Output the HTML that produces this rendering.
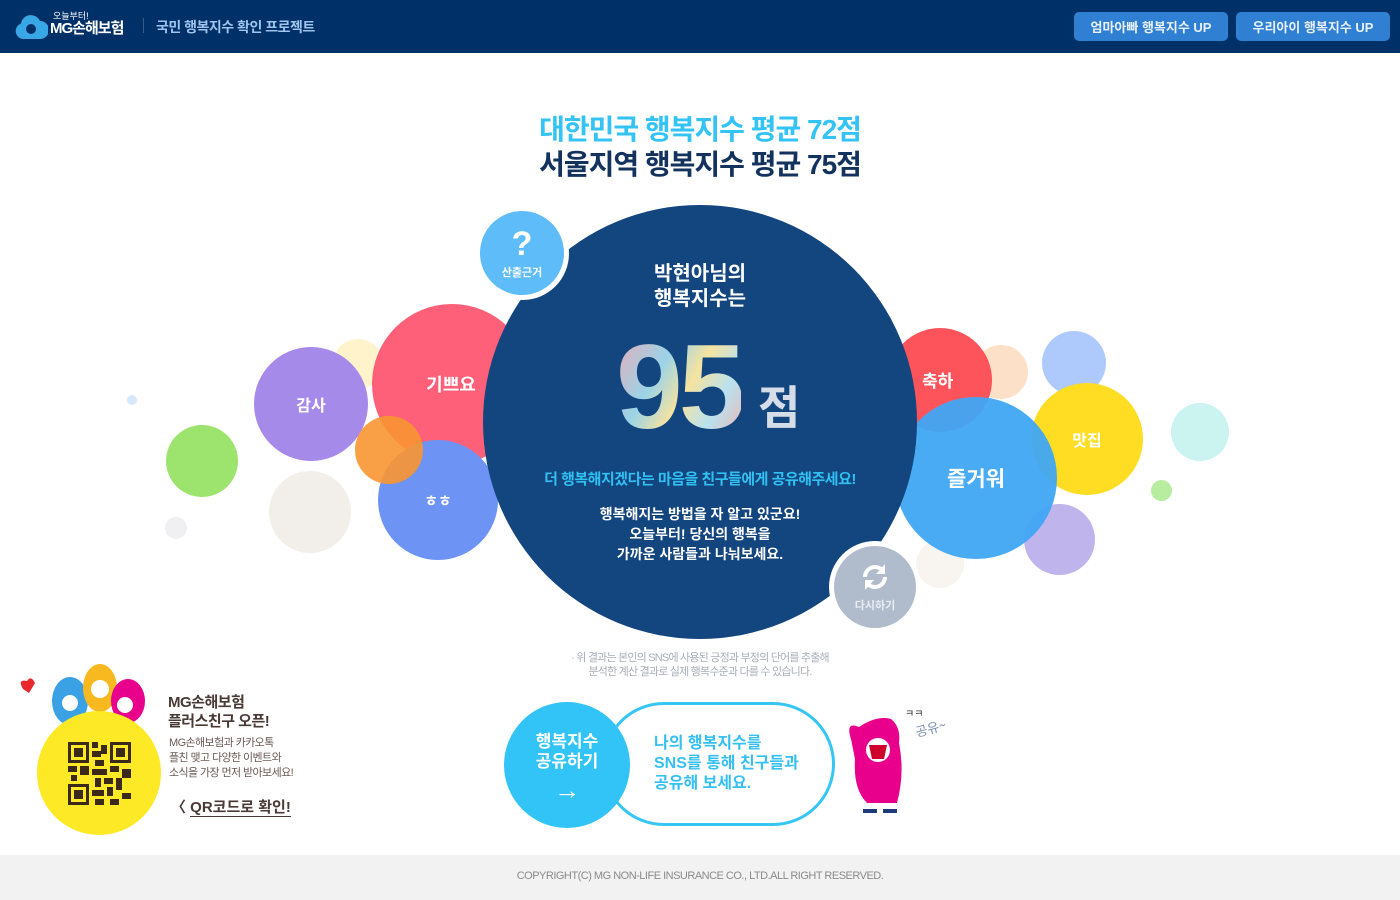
<!DOCTYPE html>
<html><head><meta charset="utf-8"><style>
*{margin:0;padding:0;box-sizing:border-box}
body{width:1400px;height:900px;position:relative;overflow:hidden;background:#fff;font-family:"Liberation Sans","Noto Sans CJK KR",sans-serif}
.hd{position:absolute;left:0;top:0;width:1400px;height:53px;background:#003068}
.c{position:absolute;border-radius:50%;display:flex;align-items:center;justify-content:center;color:#fff;font-weight:bold}
.t{position:absolute;white-space:nowrap}
.btn{position:absolute;top:12px;height:29px;background:#2f7fd3;border-radius:5px;color:#e8f0fa;font-size:13px;display:flex;align-items:center;justify-content:center;font-weight:bold}
</style></head><body>
<div class="hd">
 <svg style="position:absolute;left:14px;top:11px" width="34" height="30" viewBox="0 0 34 30"><path d="M9 28a8 8 0 0 1-2-15.5A10 10 0 0 1 26 10a8 8 0 0 1 0 18z" fill="#39a7e6"/><circle cx="17" cy="18" r="5" fill="#003068"/></svg>
 <div class="t" style="left:53px;top:9px;color:#fff;font-size:9px">오늘부터!</div>
 <div class="t" style="left:50px;top:17px;color:#fff;font-size:15px;font-weight:bold;letter-spacing:-1px">MG손해보험</div>
 <div style="position:absolute;left:143px;top:18px;width:1px;height:15px;background:#3b5a88"></div>
 <div class="t" style="left:156px;top:17px;color:#9fc4ee;font-size:14px;font-weight:bold;letter-spacing:-0.5px">국민 행복지수 확인 프로젝트</div>
 <div class="btn" style="left:1074px;width:154px">엄마아빠 행복지수 UP</div>
 <div class="btn" style="left:1236px;width:154px">우리아이 행복지수 UP</div>
</div>
<div class="t" style="left:0;width:1400px;text-align:center;top:108px;font-size:28px;font-weight:bold;color:#33c3f4;letter-spacing:-1px">대한민국 행복지수 평균 72점</div>
<div class="t" style="left:0;width:1400px;text-align:center;top:143px;font-size:28px;font-weight:bold;color:#13335e;letter-spacing:-1px">서울지역 행복지수 평균 75점</div>

<div class="c" style="left:127px;top:395px;width:10px;height:10px;background:#d6e8fa"></div>
<div class="c" style="left:166px;top:425px;width:72px;height:72px;background:#9de46f"></div>
<div class="c" style="left:269px;top:471px;width:82px;height:82px;background:#f2eeea"></div>
<div class="c" style="left:165px;top:517px;width:22px;height:22px;background:#f0f0f3"></div>
<div class="c" style="left:333px;top:339px;width:50px;height:50px;background:#fff3cc"></div>
<div class="c" style="left:372px;top:304px;width:160px;height:160px;background:#fd6078;font-size:18px;padding-right:2px">기쁘요</div>
<div class="c" style="left:254px;top:347px;width:114px;height:114px;background:#a68aea;font-size:16px">감사</div>
<div class="c" style="left:378px;top:440px;width:120px;height:120px;background:#6d93f5;font-size:15px">ㅎㅎ</div>
<div class="c" style="left:355px;top:416px;width:68px;height:68px;background:rgba(248,150,50,.9)"></div>

<div class="c" style="left:1042px;top:331px;width:64px;height:64px;background:#aecafc"></div>
<div class="c" style="left:974px;top:345px;width:54px;height:54px;background:#fde0c8"></div>
<div class="c" style="left:1031px;top:383px;width:112px;height:112px;background:#ffdd22;font-size:16px">맛집</div>
<div class="c" style="left:1024px;top:504px;width:71px;height:71px;background:#c0b4ec"></div>
<div class="c" style="left:916px;top:540px;width:48px;height:48px;background:#f8f4ef"></div>
<div class="c" style="left:1171px;top:403px;width:58px;height:58px;background:#cbf3ef"></div>
<div class="c" style="left:1151px;top:480px;width:21px;height:21px;background:#b8ec9f"></div>
<div class="c" style="left:888px;top:328px;width:104px;height:104px;background:#fd545b;font-size:17px;justify-content:flex-start;padding-left:34px;padding-bottom:2px">축하</div>
<div class="c" style="left:895px;top:397px;width:162px;height:162px;background:rgba(64,166,244,.95);font-size:21px">즐거워</div>

<div class="c" style="left:483px;top:205px;width:434px;height:434px;background:#13457f"></div>
<div class="t" style="left:483px;width:434px;text-align:center;top:262px;color:#fff;font-size:20px;font-weight:bold;line-height:25px">박현아님의<br>행복지수는</div>
<div class="t" style="left:616px;top:322px;font-size:120px;font-weight:bold;line-height:130px;letter-spacing:-4px;background:linear-gradient(120deg,#f4a6b0,#9ad3e8 35%,#f6e3a0 55%,#b9e1f0 75%,#f4b0a8);-webkit-background-clip:text;background-clip:text;color:transparent">95</div>
<div class="t" style="left:758px;top:372px;font-size:46px;font-weight:bold;color:#d5dde8">점</div>
<div class="t" style="left:483px;width:434px;text-align:center;top:468px;color:#31c0f2;font-size:15px;font-weight:bold;letter-spacing:-0.5px">더 행복해지겠다는 마음을 친구들에게 공유해주세요!</div>
<div class="t" style="left:483px;width:434px;text-align:center;top:504px;color:#fff;font-size:14px;font-weight:bold;line-height:20px">행복해지는 방법을 자 알고 있군요!<br>오늘부터! 당신의 행복을<br>가까운 사람들과 나눠보세요.</div>

<div class="c" style="left:476px;top:207px;width:93px;height:93px;background:#fff"></div>
<div class="c" style="left:480px;top:211px;width:84px;height:84px;background:#5ebcf9;flex-direction:column"><span style="font-size:34px;line-height:34px">?</span><span style="font-size:11px;margin-top:3px">산출근거</span></div>
<div class="c" style="left:829px;top:541px;width:92px;height:92px;background:#fff"></div>
<div class="c" style="left:834px;top:546px;width:82px;height:82px;background:#b0bccc;flex-direction:column;color:#e8edf3">
 <svg width="34" height="32" viewBox="0 0 34 32"><path d="M7 16a10 10 0 0 1 18-6" fill="none" stroke="#fff" stroke-width="4"/><path d="M27 3v10h-9z" fill="#fff"/><path d="M27 16a10 10 0 0 1-18 6" fill="none" stroke="#fff" stroke-width="4"/><path d="M7 29V19h9z" fill="#fff"/></svg>
 <span style="font-size:11px;margin-top:4px">다시하기</span></div>

<div class="t" style="left:0;width:1400px;text-align:center;top:651px;color:#a7adb8;font-size:11px;line-height:14px;letter-spacing:-0.8px">· 위 결과는 본인의 SNS에 사용된 긍정과 부정의 단어를 추출해<br>분석한 계산 결과로 실제 행복수준과 다를 수 있습니다.</div>

<div style="position:absolute;left:602px;top:702px;width:233px;height:124px;border:3px solid #36c6f4;border-radius:62px;background:#fff"></div>
<div class="c" style="left:504px;top:702px;width:126px;height:126px;background:#32c4f6;flex-direction:column;font-size:17px;line-height:20px;justify-content:flex-start;padding-top:30px">행복지수<br>공유하기<span style="font-size:26px;margin-top:8px;font-weight:normal">→</span></div>
<div class="t" style="left:654px;top:734px;color:#36c0f2;font-size:16px;font-weight:bold;line-height:20px">나의 행복지수를<br>SNS를 통해 친구들과<br>공유해 보세요.</div>

<svg style="position:absolute;left:843px;top:705px" width="110" height="112" viewBox="0 0 110 112"><path d="M16 22q-14-6-8 12l4 20q-2 30 12 44l30 0q8-30 2-60q2-16-8-24q-14-4-32 8z" fill="#e8008c"/><circle cx="35" cy="45" r="12" fill="#fff"/><path d="M26 40h18l-3 14h-12z" fill="#d0002c"/><path d="M20 106h14M40 106h14" stroke="#1c3b78" stroke-width="4"/><text x="62" y="12" font-size="10" fill="#333" font-family="Noto Sans CJK KR">ㅋㅋ</text><text x="74" y="32" font-size="13" fill="#7a8fb0" font-family="Noto Sans CJK KR" transform="rotate(-15 74 32)">공유~</text></svg>

<svg style="position:absolute;left:15px;top:663px" width="135" height="70" viewBox="0 0 135 70"><path d="M8 26q-6-10 4-8q4-6 8 2l-6 10z" fill="#e8282c"/><ellipse cx="55" cy="38" rx="18" ry="24" fill="#3aa1e4"/><ellipse cx="85" cy="25" rx="17" ry="24" fill="#f8b820"/><ellipse cx="113" cy="38" rx="17" ry="22" fill="#e8008c"/><circle cx="55" cy="40" r="8" fill="#fff"/><circle cx="85" cy="26" r="9" fill="#fff"/><circle cx="110" cy="42" r="8" fill="#fff"/></svg>
<div class="c" style="left:37px;top:711px;width:124px;height:124px;background:#fde925"></div>
<svg style="position:absolute;left:68px;top:742px" width="63" height="63" viewBox="0 0 21 21"><rect width="21" height="21" fill="#fde925"/><g fill="#3b2a1a"><path d="M0 0h7v7H0zM14 0h7v7h-7zM0 14h7v7H0z"/></g><g fill="#fde925"><path d="M1 1h5v5H1zM15 1h5v5h-5zM1 15h5v5H1z"/></g><g fill="#3b2a1a"><path d="M2 2h3v3H2zM16 2h3v3h-3zM2 16h3v3H2zM8 0h2v2H8zM11 1h2v3h-2zM8 3h3v2H8zM9 6h3v2H9zM0 8h3v2H0zM4 8h3v3H4zM8 9h5v2H8zM14 8h3v2h-3zM18 9h3v3h-3zM1 11h2v2H1zM9 12h2v3H9zM12 12h3v2h-3zM16 12h2v4h-2zM8 16h4v2H8zM13 15h2v3h-2zM18 17h3v2h-3zM9 19h3v2H9zM14 19h3v2h-3z"/></g></svg>
<div class="t" style="left:168px;top:693px;color:#4a3a36;font-size:15px;font-weight:bold;line-height:19px;letter-spacing:-0.5px">MG손해보험<br>플러스친구 오픈!</div>
<div class="t" style="left:169px;top:736px;color:#6a5a56;font-size:11px;line-height:15px;letter-spacing:-0.6px">MG손해보험과 카카오톡<br>플친 맺고 다양한 이벤트와<br>소식을 가장 먼저 받아보세요!</div>
<div class="t" style="left:171px;top:796px;color:#4a3a36;font-size:15px;font-weight:bold">〈 <span style="border-bottom:1px solid #4a3a36">QR코드로 확인!</span></div>

<div style="position:absolute;left:0;top:855px;width:1400px;height:45px;background:#f2f2f2"></div>
<div class="t" style="left:0;width:1400px;text-align:center;top:870px;color:#8a8a8a;font-size:11px;letter-spacing:-0.5px">COPYRIGHT(C) MG NON-LIFE INSURANCE CO., LTD.ALL RIGHT RESERVED.</div>
</body></html>
